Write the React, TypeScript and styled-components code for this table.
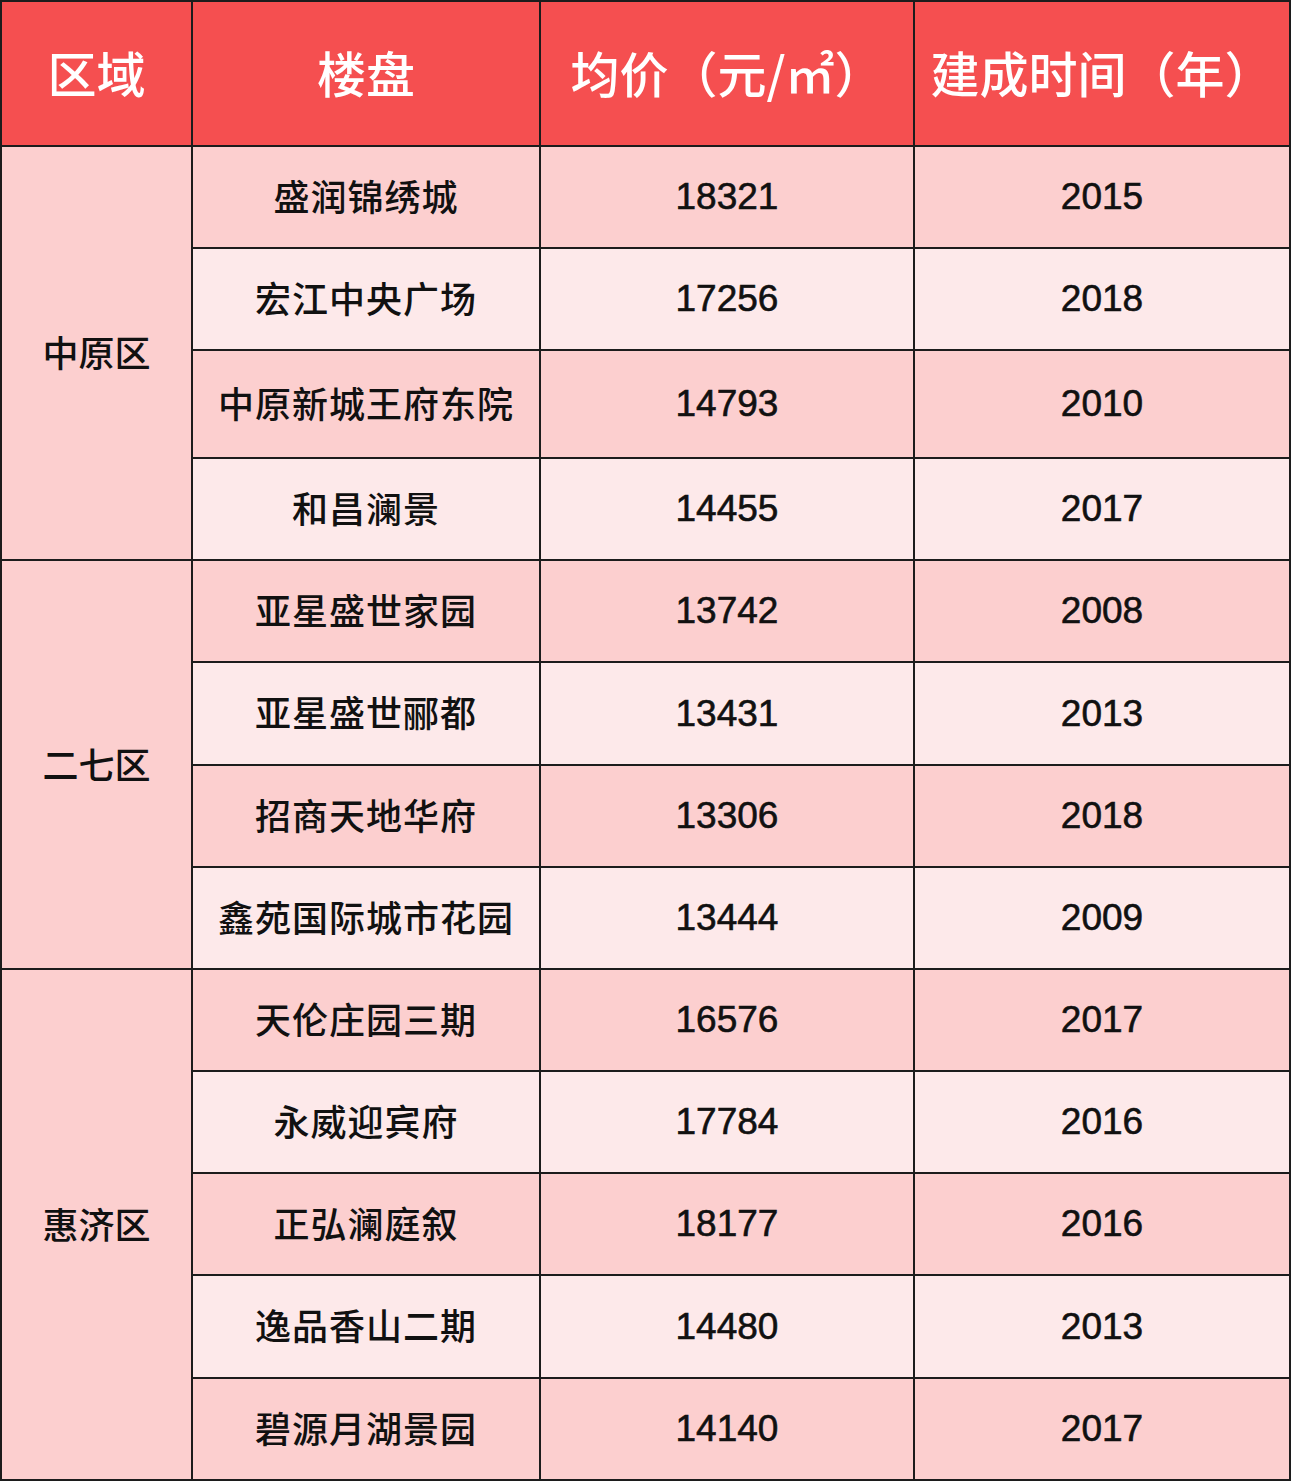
import React from "react";
import styled, { createGlobalStyle } from "styled-components";

const Global = createGlobalStyle`
  html, body { margin: 0; padding: 0; background: #ffffff; }
  body { font-family: "Liberation Sans", "Noto Sans CJK SC", sans-serif; }
`;

const Table = styled.table`
  width: 1289px;
  border-collapse: collapse;
  table-layout: fixed;
`;

const HeadCell = styled.th`
  background: #f54f50;
  color: #ffffff;
  border: 2px solid #1c1c1c;
  font-family: "Noto Sans CJK SC", sans-serif;
  font-size: 49px;
  font-weight: 500;
  text-align: center;
  vertical-align: middle;
  padding: 0 0 4px;
  white-space: nowrap;
`;

const DistrictCell = styled.td`
  background: #fccfcf;
  border: 2px solid #1c1c1c;
  font-family: "Noto Sans CJK SC", sans-serif;
  font-size: 36px;
  font-weight: 500;
  color: #111111;
  text-align: center;
  vertical-align: middle;
  padding: 0 0 4px;
`;

const Cell = styled.td<{ $dark: boolean; $num?: boolean }>`
  background: ${(p) => (p.$dark ? "#fccfcf" : "#fde9ea")};
  border: 2px solid #1c1c1c;
  font-family: ${(p) =>
    p.$num ? `"Liberation Sans", Arial, sans-serif` : `"Noto Sans CJK SC", sans-serif`};
  font-size: ${(p) => (p.$num ? "37px" : "36px")};
  font-weight: ${(p) => (p.$num ? 400 : 500)};
  letter-spacing: ${(p) => (p.$num ? "0" : "1px")};
  -webkit-text-stroke: ${(p) => (p.$num ? "0.6px #111111" : "0")};
  color: #111111;
  text-align: center;
  vertical-align: middle;
  padding: ${(p) => (p.$num ? "0" : "0 0 5px")};
  white-space: nowrap;
`;

const Row = styled.tr<{ $h: number }>`
  height: ${(p) => p.$h}px;
`;

type Item = { name: string; price: string; year: string };
type Group = { district: string; items: Item[] };

const groups: Group[] = [
  {
    district: "中原区",
    items: [
      { name: "盛润锦绣城", price: "18321", year: "2015" },
      { name: "宏江中央广场", price: "17256", year: "2018" },
      { name: "中原新城王府东院", price: "14793", year: "2010" },
      { name: "和昌澜景", price: "14455", year: "2017" },
    ],
  },
  {
    district: "二七区",
    items: [
      { name: "亚星盛世家园", price: "13742", year: "2008" },
      { name: "亚星盛世郦都", price: "13431", year: "2013" },
      { name: "招商天地华府", price: "13306", year: "2018" },
      { name: "鑫苑国际城市花园", price: "13444", year: "2009" },
    ],
  },
  {
    district: "惠济区",
    items: [
      { name: "天伦庄园三期", price: "16576", year: "2017" },
      { name: "永威迎宾府", price: "17784", year: "2016" },
      { name: "正弘澜庭叙", price: "18177", year: "2016" },
      { name: "逸品香山二期", price: "14480", year: "2013" },
      { name: "碧源月湖景园", price: "14140", year: "2017" },
    ],
  },
];

const heights = [102, 102, 108, 102, 102, 103, 102, 102, 102, 102, 102, 103, 102];

export default function App() {
  let idx = 0;
  return (
    <>
      <Global />
      <Table>
        <colgroup>
          <col style={{ width: 191 }} />
          <col style={{ width: 348 }} />
          <col style={{ width: 374 }} />
          <col style={{ width: 376 }} />
        </colgroup>
        <thead>
          <Row $h={145}>
            <HeadCell>区域</HeadCell>
            <HeadCell>楼盘</HeadCell>
            <HeadCell>均价（元/㎡）</HeadCell>
            <HeadCell>建成时间（年）</HeadCell>
          </Row>
        </thead>
        <tbody>
          {groups.map((g) =>
            g.items.map((it, i) => {
              const k = idx++;
              const dark = k % 2 === 0;
              return (
                <Row key={k} $h={heights[k]}>
                  {i === 0 && <DistrictCell rowSpan={g.items.length}>{g.district}</DistrictCell>}
                  <Cell $dark={dark}>{it.name}</Cell>
                  <Cell $dark={dark} $num>
                    {it.price}
                  </Cell>
                  <Cell $dark={dark} $num>
                    {it.year}
                  </Cell>
                </Row>
              );
            })
          )}
        </tbody>
      </Table>
    </>
  );
}
